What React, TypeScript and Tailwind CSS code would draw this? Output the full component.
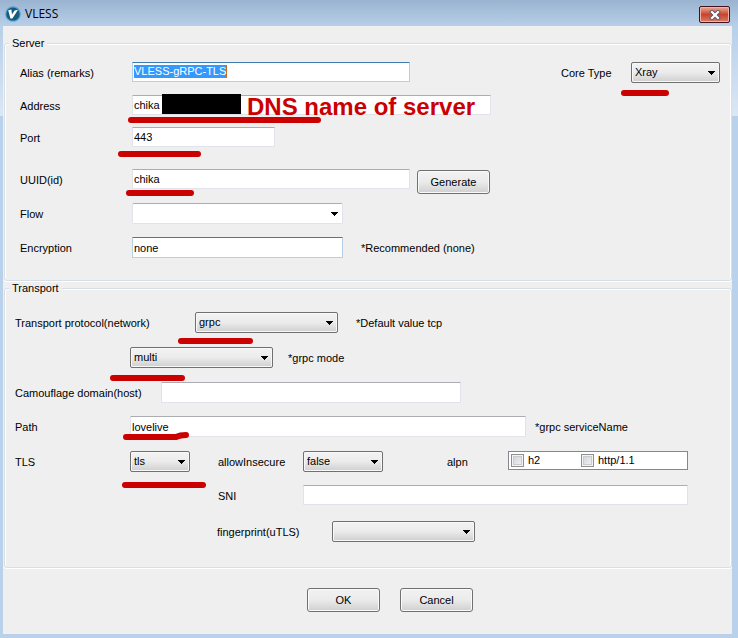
import type { ReactNode } from "react";

function Caret() {
  return (
    <svg className="pointer-events-none absolute right-[5px] top-[9px]" width="7" height="4" viewBox="0 0 7 4" shapeRendering="crispEdges" aria-hidden="true">
      <path d="M0 0h7v1H0zM1 1h5v1H1zM2 2h3v1H2zM3 3h1v1H3z" fill="#000" />
    </svg>
  );
}

// Hand-drawn red underline laid over a field.
function Mark({ place, width, d }: { place: string; width: number; d?: string }) {
  return (
    <svg className={`pointer-events-none absolute z-10 ${place}`} width={width} height="10" viewBox={`0 0 ${width} 10`} aria-hidden="true">
      <path d={d ?? `M4 5H${width - 4}`} stroke="#cb0000" strokeWidth="6" strokeLinecap="round" strokeLinejoin="round" fill="none" />
    </svg>
  );
}

const faces = {
  raised: "border-[#707070] bg-linear-to-b from-[#f3f3f3] from-0% via-[#ebebeb] via-50% to-[#cfcfcf] shadow-[inset_0_0_0_1px_#f8f8f8]",
  flat: "border-[#e2e3ea] border-t-[#abadb3] bg-white",
};

function Select({ id, options, width, face = "raised", children }: { id: string; options: string[]; width: string; face?: keyof typeof faces; children?: ReactNode }) {
  return (
    <div className={`relative shrink-0 ${width}`}>
      <select id={id} className={`block h-[21px] w-full appearance-none rounded-[2px] border pl-[3px] leading-[19px] outline-none ${faces[face]}`}>
        {options.map((o) => (
          <option key={o}>{o}</option>
        ))}
      </select>
      <Caret />
      {children}
    </div>
  );
}

function Field({ id, value = "", width, active = false, tall = false, children }: { id: string; value?: string; width: string; active?: boolean; tall?: boolean; children?: ReactNode }) {
  return (
    <div className={`relative shrink-0 ${width}`}>
      <input
        id={id}
        type="text"
        defaultValue={value}
        className={`block w-full rounded-[1px] border bg-white px-px outline-none ${tall ? "h-[21px]" : "h-5"} ${active ? "border-[#b5cfe7] border-t-[#3d7bad]" : "border-[#e2e3ea] border-t-[#abadb3]"}`}
      />
      {children}
    </div>
  );
}

function Row({ height, children }: { height: string; children: ReactNode }) {
  return <div className={`flex items-start ${height}`}>{children}</div>;
}

function Label({ htmlFor, width, children }: { htmlFor: string; width: string; children: ReactNode }) {
  return (
    <label htmlFor={htmlFor} className={`shrink-0 whitespace-nowrap leading-[22px] ${width}`}>
      {children}
    </label>
  );
}

function Note({ gap, children }: { gap: string; children: ReactNode }) {
  return <span className={`whitespace-nowrap leading-[22px] ${gap}`}>{children}</span>;
}

function Button({ children }: { children: ReactNode }) {
  return (
    <button type="button" className="h-6 w-[73px] rounded-[3px] border border-[#707070] bg-linear-to-b from-[#f2f2f2] from-0% via-[#ebebeb] via-50% to-[#cfcfcf] text-center shadow-[inset_0_0_0_1px_#fafafa]">
      {children}
    </button>
  );
}

function Group({ title, padding, children }: { title: string; padding: string; children: ReactNode }) {
  return (
    <fieldset className="mb-px ml-px min-w-0 rounded-[3px] border border-[#d5dfe5] pl-1 shadow-[inset_1px_1px_0_#fff,inset_-1px_0_0_#fff,0_1px_0_#fff]">
      <legend className="bg-[#efefef] px-[3px] leading-[13px]">{title}</legend>
      <div className={padding}>{children}</div>
    </fieldset>
  );
}

function Check({ id, label, width }: { id: string; label: string; width: string }) {
  return (
    <div className={`flex items-center ${width}`}>
      <input id={id} type="checkbox" className="size-[13px] appearance-none border border-[#8e8f8f] bg-linear-to-br from-[#cbcfd5] to-[#f6f6f6] shadow-[inset_0_0_0_1px_#f4f4f4,inset_0_0_0_2px_#c8cbd0]" />
      <label htmlFor={id} className="pl-1 leading-[17px]">{label}</label>
    </div>
  );
}

export default function App() {
  return (
    <div className="flex min-h-screen flex-col bg-[#b9d1ea] bg-linear-to-b from-[#b7cfe9] from-[26px] via-[#dbe7f5] via-[116px] to-[#b9d1ea] to-[116px] pb-1 pl-[3px] pr-[6px] font-['Liberation_Sans',sans-serif] text-[11px] text-black">
      <header className="-ml-[3px] -mr-[6px] flex h-[26px] items-start justify-between bg-linear-to-b from-[#9ab3d0] to-[#b7cfe9] pl-[5px] pr-2 pt-[6px]">
        <div className="flex items-center gap-1">
          <svg width="16" height="16" viewBox="0 0 16 16" aria-hidden="true">
            <circle cx="8" cy="8" r="7.8" fill="#4fa3cc" />
            <circle cx="8" cy="8" r="6.6" fill="#17597f" />
            <path d="M3.2 4.2L6.4 3.6L7 8.4L9.6 4.4L13 3.8L7.4 12.4H5.4z" fill="#fff" />
          </svg>
          <h1 className="font-['Open_Sans',sans-serif] text-[12px] leading-4">VLESS</h1>
        </div>
        <button type="button" aria-label="Close" className="flex h-[17px] w-[31px] items-center justify-center rounded-[2px] border border-[#43131c] bg-linear-to-b from-[#e9a99a] from-0% via-[#c9422c] via-50% to-[#d67b67] shadow-[inset_0_0_0_1px_#efb5a8]">
          <svg width="12" height="10" viewBox="0 0 12 10" aria-hidden="true">
            <path d="M3 2l6 6M9 2L3 8" stroke="#535666" strokeWidth="4" strokeLinecap="square" />
            <path d="M3 2l6 6M9 2L3 8" stroke="#fff" strokeWidth="2.2" strokeLinecap="square" />
          </svg>
        </button>
      </header>

      <main className="flex-1 bg-[#efefef] pt-[11px]">
        <Group title="Server" padding="pt-3 pb-[22px] pl-[11px] pr-[11px]">
          <Row height="h-[33px]">
            <Label htmlFor="alias" width="w-28">Alias (remarks)</Label>
            <div className="relative w-[278px] shrink-0">
              <div id="alias" role="textbox" aria-label="Alias (remarks)" contentEditable suppressContentEditableWarning className="h-5 rounded-[1px] border border-[#b5cfe7] border-t-[#3d7bad] bg-white px-px pt-[2px] leading-[13px] outline-none">
                <span className="inline-block border-r border-[#c86a1e] bg-[#3399ff] text-white">VLESS-gRPC-TLS</span>
              </div>
            </div>
            <div className="ml-auto flex">
              <Label htmlFor="core" width="w-[70px]">Core Type</Label>
              <Select id="core" options={["Xray"]} width="w-[89px]">
                <Mark place="-left-[11px] top-[26px]" width={50} />
              </Select>
            </div>
          </Row>
          <Row height="h-8">
            <Label htmlFor="address" width="w-28">Address</Label>
            <Field id="address" value="chika" width="w-[359px]">
              <span className="absolute -top-px left-[30px] h-5 w-[79px] bg-black" />
              <span className="absolute left-[115px] top-0 whitespace-nowrap text-[24px] font-bold leading-6 text-[#cb0000]">DNS name of server</span>
              <Mark place="-left-[5px] top-[20px]" width={195} />
            </Field>
          </Row>
          <Row height="h-[42px]">
            <Label htmlFor="port" width="w-28">Port</Label>
            <Field id="port" value="443" width="w-[143px]">
              <Mark place="-left-[15px] top-[22px]" width={85} />
            </Field>
          </Row>
          <Row height="h-[34px]">
            <Label htmlFor="uuid" width="w-28">UUID(id)</Label>
            <Field id="uuid" value="chika" width="w-[278px]">
              <Mark place="-left-[7px] top-[19px]" width={70} />
            </Field>
            <div className="ml-[7px] pt-px">
              <Button>Generate</Button>
            </div>
          </Row>
          <Row height="h-[34px]">
            <Label htmlFor="flow" width="w-28">Flow</Label>
            <Select id="flow" options={[""]} width="w-[211px]" face="flat" />
          </Row>
          <Row height="h-[21px]">
            <Label htmlFor="encryption" width="w-28">Encryption</Label>
            <Field id="encryption" value="none" width="w-[211px]" active tall />
            <Note gap="ml-[18px]">*Recommended (none)</Note>
          </Row>
        </Group>

        <Group title="Transport" padding="pt-[17px] pb-[25px] pl-[6px] pr-[11px]">
          <Row height="h-[35px]">
            <Label htmlFor="network" width="w-[180px]">Transport protocol(network)</Label>
            <Select id="network" options={["grpc"]} width="w-[143px]">
              <Mark place="-left-[18px] top-[24px]" width={77} />
            </Select>
            <Note gap="ml-[18px]">*Default value tcp</Note>
          </Row>
          <Row height="h-[35px]">
            <div className="w-[115px] shrink-0" />
            <Select id="mode" options={["multi"]} width="w-[143px]">
              <Mark place="-left-[21px] top-[26px]" width={77} />
            </Select>
            <label htmlFor="mode" className="ml-[15px] leading-[22px]">*grpc mode</label>
          </Row>
          <Row height="h-[34px]">
            <Label htmlFor="host" width="w-[146px]">Camouflage domain(host)</Label>
            <Field id="host" width="w-[300px]" tall />
          </Row>
          <Row height="h-[35px]">
            <Label htmlFor="path" width="w-[115px]">Path</Label>
            <Field id="path" value="lovelive" width="w-[396px]" tall>
              <Mark place="-left-[8px] top-[15px]" width={68} d="M4 6H54Q58 4 64 4" />
            </Field>
            <Note gap="ml-[9px]">*grpc serviceName</Note>
          </Row>
          <Row height="h-[34px]">
            <Label htmlFor="tls" width="w-[115px]">TLS</Label>
            <Select id="tls" options={["tls"]} width="w-[60px]">
              <Mark place="-left-[9px] top-[29px]" width={86} />
            </Select>
            <div className="w-7 shrink-0" />
            <Label htmlFor="insecure" width="w-[85px]">allowInsecure</Label>
            <Select id="insecure" options={["false"]} width="w-20" />
            <span className="ml-16 w-[61px] shrink-0 leading-[22px]">alpn</span>
            <div role="group" aria-label="alpn" className="flex h-[19px] w-[180px] shrink-0 border border-[#828790] bg-white pl-[2px]">
              <Check id="h2" label="h2" width="w-[70px]" />
              <Check id="http11" label="http/1.1" width="w-[80px]" />
            </div>
          </Row>
          <Row height="h-[36px]">
            <div className="w-[203px] shrink-0" />
            <Label htmlFor="sni" width="w-[85px]">SNI</Label>
            <Field id="sni" width="w-[385px]" />
          </Row>
          <Row height="h-[21px]">
            <div className="w-[202px] shrink-0" />
            <Label htmlFor="fingerprint" width="w-[115px]">fingerprint(uTLS)</Label>
            <Select id="fingerprint" options={[""]} width="w-[143px]" />
          </Row>
        </Group>

        <div className="flex justify-center gap-5 pb-[22px] pl-[45px] pt-[19px]">
          <Button>OK</Button>
          <Button>Cancel</Button>
        </div>
      </main>
    </div>
  );
}
